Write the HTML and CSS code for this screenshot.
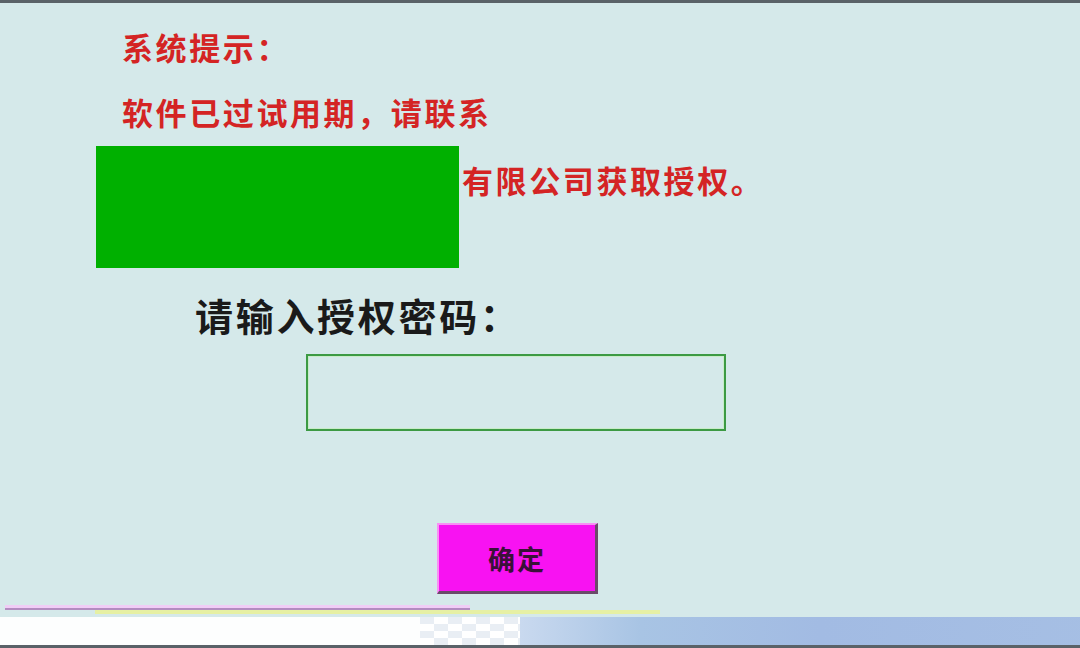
FILE: index.html
```html
<!DOCTYPE html>
<html lang="zh-CN">
<head>
<meta charset="utf-8">
<title>系统提示</title>
<link rel="stylesheet" href="styles.css">
</head>
<body>
<div class="topbar"></div>
<div class="main">
  <p class="notice title">系统提示：</p>
  <p class="notice line2">软件已过试用期，请联系</p>
  <div class="company-row">
    <div class="company-logo"></div>
    <p class="notice line3">有限公司获取授权。</p>
  </div>
  <p class="label">请输入授权密码：</p>
  <input class="pwd" type="password" aria-label="授权密码">
  <button class="ok" type="button">确定</button>
</div>
<div class="footer">
  <div class="line-pink"></div>
  <div class="line-yellow"></div>
  <div class="strip">
    <div class="strip-white"></div>
    <div class="strip-checker"></div>
    <div class="strip-blue"></div>
  </div>
  <div class="bottombar"></div>
</div>
</body>
</html>
```
FILE: styles.css
```css
html, body {
  margin: 0;
  padding: 0;
  width: 1080px;
  height: 648px;
  overflow: hidden;
  background: #d5e9ea;
  font-family: "Noto Sans CJK SC", "Noto Sans", sans-serif;
}

.topbar {
  height: 3px;
  background: #5a6268;
}

.main {
  height: 602px;
  display: flex;
  flex-direction: column;
  align-items: flex-start;
  padding-top: 28px;
  box-sizing: border-box;
}

.notice {
  margin: 0;
  color: #d42424;
  font-weight: 700;
  font-size: 31px;
  line-height: 32px;
  letter-spacing: 2.6px;
}

.title {
  margin-left: 122px;
}

.line2 {
  margin-left: 122px;
  margin-top: 33px;
}

.company-row {
  display: flex;
  align-items: flex-start;
  margin-left: 96px;
  margin-top: 18px;
}

.company-logo {
  width: 363px;
  height: 122px;
  background: #00b000;
}

.line3 {
  margin-left: 3px;
  margin-top: 18px;
}

.label {
  margin: 28px 0 0 195px;
  color: #1a1a1a;
  font-weight: 700;
  font-size: 38px;
  line-height: 38px;
  letter-spacing: 2.7px;
}

.pwd {
  margin: 20px 0 0 306px;
  width: 420px;
  height: 77px;
  box-sizing: border-box;
  border: 2px solid #3c9a44;
  box-shadow: inset 0 0 0 1px #c8ecc8;
  background: #d5e9ea;
  outline: none;
}

.ok {
  margin: 92px 0 0 437px;
  width: 161px;
  height: 71px;
  box-sizing: border-box;
  background: #f812f2;
  border: none;
  border-top: 2px solid #f890f4;
  border-left: 2px solid #f890f4;
  border-right: 3px solid #6a4a6a;
  border-bottom: 3px solid #6a4a6a;
  color: #3a1038;
  font-family: "Noto Sans CJK SC", sans-serif;
  font-weight: 700;
  font-size: 27px;
  letter-spacing: 2px;
  padding: 0;
}

.footer {
  height: 43px;
  display: flex;
  flex-direction: column;
}

.line-pink {
  margin-left: 5px;
  width: 465px;
  height: 5px;
  background: linear-gradient(#f0cdf6 0 55%, #b28cc0 55% 100%);
}

.line-yellow {
  margin: 0 0 0 95px;
  width: 565px;
  height: 4px;
  background: #e6f0a4;
}

.strip {
  margin-top: 3px;
  height: 28px;
  display: flex;
}

.strip-white {
  width: 420px;
  background: #fdfefe;
}

.strip-checker {
  width: 100px;
  background:
    conic-gradient(#ffffff 0 25%, #e9eef4 0 50%, #ffffff 0 75%, #e9eef4 0) 0 0 / 28px 14px;
}

.strip-blue {
  flex: 1;
  background: linear-gradient(90deg, #c9d9ef 0, #a8c4e4 120px, #a2bbe3 300px, #a6bfe4 600px, #a3bbe3 100%);
}

.bottombar {
  height: 3px;
  background: #5a6268;
}
```
